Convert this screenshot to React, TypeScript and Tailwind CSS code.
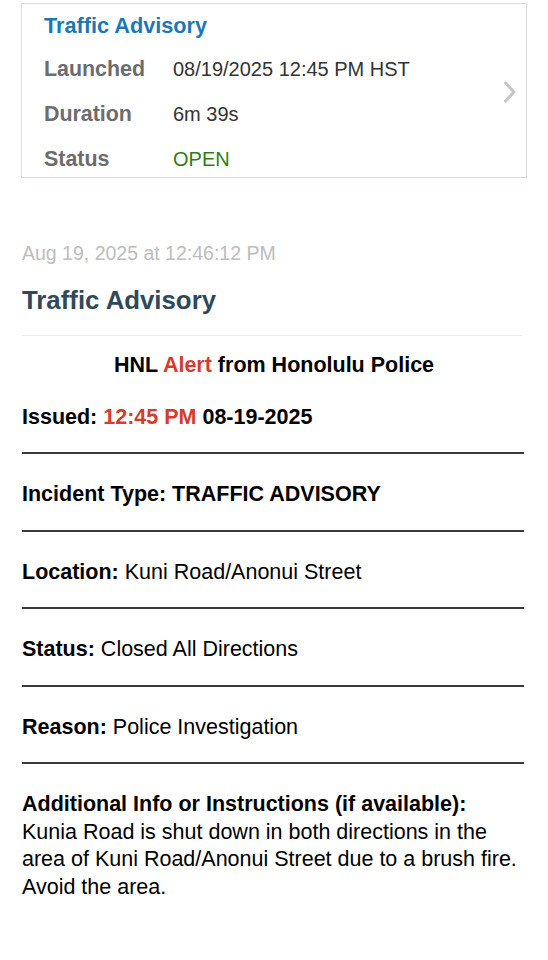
const font = { fontFamily: '"Liberation Sans", Arial, sans-serif' };

const rows = [
  { label: "Launched", value: "08/19/2025 12:45 PM HST", tone: "text-[#333333]" },
  { label: "Duration", value: "6m 39s", tone: "text-[#333333]" },
  { label: "Status", value: "OPEN", tone: "text-[#2f7d12]" },
];

function Rule() {
  return <div className="h-[2px] bg-[#3a3a3a] mr-[2px]" />;
}

function Chevron() {
  return (
    <svg width="14" height="22" viewBox="0 0 14 22" className="absolute right-[9px] top-[77px]">
      <polyline points="2.5,2 11,11 2.5,20" fill="none" stroke="#c5c5ca" strokeWidth="3" strokeLinecap="round" strokeLinejoin="round" />
    </svg>
  );
}

export default function App() {
  return (
    <div className="min-h-[960px] w-[548px] bg-white" style={font}>
      <div className="pt-[3px] px-[21px]">
        <div className="relative border border-[#d9dde1] h-[175px] pl-[22px] pt-[9px]">
          <div className="text-[21.7px] font-bold text-[#1b78b6] leading-[26px]">Traffic Advisory</div>
          <div className="mt-[18px] flex flex-col gap-[21px]">
            {rows.map((r) => (
              <div key={r.label} className="flex items-center leading-[24px]">
                <span className="w-[129px] text-[21.4px] font-bold text-[#6c6c6c]">{r.label}</span>
                <span className={`text-[20px] ${r.tone}`}>{r.value}</span>
              </div>
            ))}
          </div>
          <Chevron />
        </div>
      </div>

      <div className="px-[22px] pt-[63px]">
        <div className="text-[19.5px] text-[#bdbdbd] leading-[24px]">Aug 19, 2025 at 12:46:12 PM</div>
        <div className="mt-[20px] text-[25.8px] font-bold text-[#2e4a58] leading-[30px]">Traffic Advisory</div>
        <div className="mt-[20px] h-px bg-[#ececec] mr-[4px]" />

        <div className="text-black text-[21.5px] leading-[27.5px]">
          <div className="mt-[16px] text-center font-bold">
            HNL <span className="text-[#d63b2b]">Alert</span> from Honolulu Police
          </div>
          <div className="mt-[24px] font-bold">
            Issued: <span className="text-[#d63b2b]">12:45 PM</span> 08-19-2025
          </div>
          <div className="mt-[21px]"><Rule /></div>
          <div className="pt-[27px] pb-[21px] font-bold">Incident Type: TRAFFIC ADVISORY</div>
          <Rule />
          <div className="pt-[27px] pb-[21px]"><b>Location:</b> Kuni Road/Anonui Street</div>
          <Rule />
          <div className="pt-[27px] pb-[21px]"><b>Status:</b> Closed All Directions</div>
          <Rule />
          <div className="pt-[27px] pb-[21px]"><b>Reason:</b> Police Investigation</div>
          <Rule />
          <div className="pt-[27px]">
            <div className="font-bold">Additional Info or Instructions (if available):</div>
            <div>
              Kunia Road is shut down in both directions in the area of Kuni Road/Anonui Street due to a brush fire. Avoid the area.
            </div>
          </div>
        </div>
      </div>
    </div>
  );
}
